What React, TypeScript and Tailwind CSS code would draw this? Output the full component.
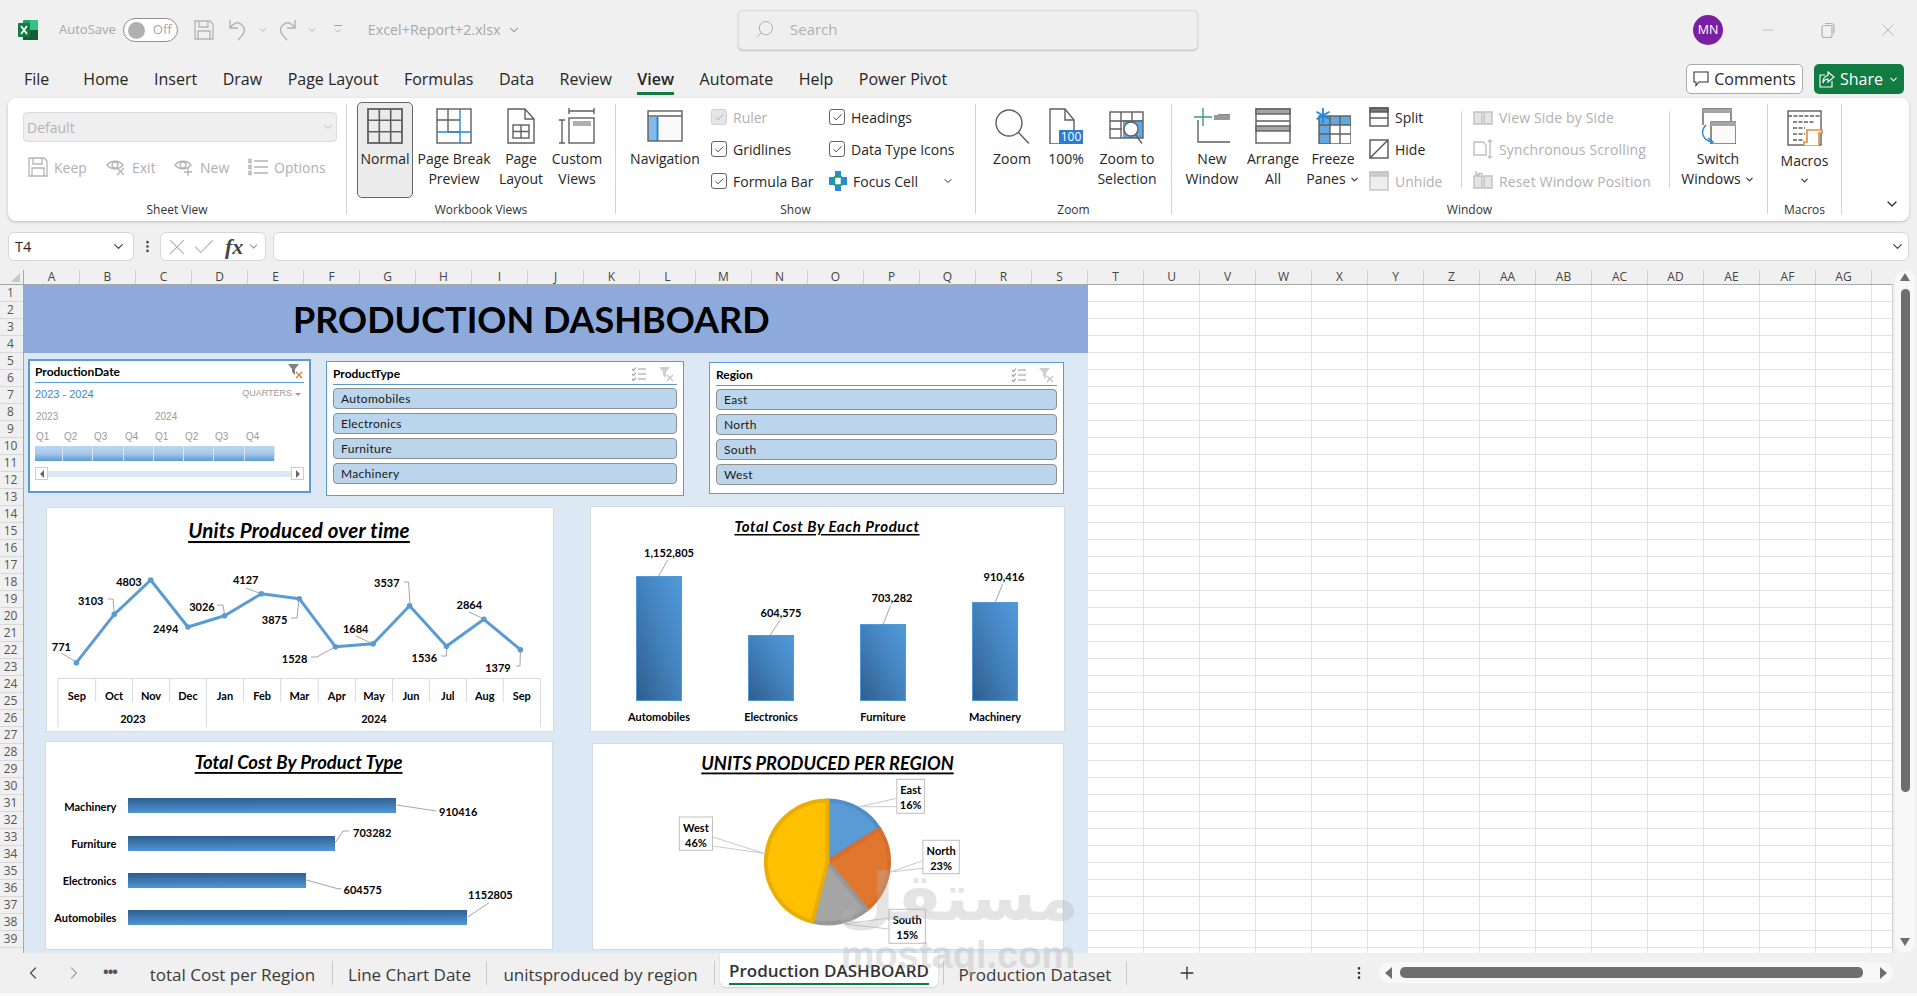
import { ChevronDown, ChevronLeft, ChevronRight, Check, Plus, Search, X, Minus, MoreVertical } from "lucide-react"
import type { ReactNode } from "react"

const STROKE = "#5f5f5f"

const COLUMNS_LEFT = "A B C D E F G H I J K L M N O P Q R S T U V W X Y Z AA AB AC AD AE AF AG".split(" ")
const ROWS = Array.from({ length: 39 }, (_, i) => i + 1)

// ---- small title bar / ribbon icons ----

function ExcelLogo() {
  return (
    <svg width="20" height="20" viewBox="0 0 20 20">
      <rect x="5" y="0" width="15" height="20" rx="1" fill="#21a366" />
      <rect x="12" y="0" width="8" height="10" fill="#33c481" />
      <rect x="5" y="10" width="15" height="10" fill="#185c37" />
      <rect x="0" y="3" width="12" height="14" rx="1" fill="#107c41" />
      <path d="M3 6l6 8M9 6l-6 8" stroke="#fff" strokeWidth="1.8" />
    </svg>
  )
}

function SaveIcon({ color = "#b4b4b4", size = 20 }: { color?: string; size?: number }) {
  return (
    <svg width={size} height={size} viewBox="0 0 20 20" fill="none" stroke={color} strokeWidth="1.3">
      <path d="M1 1h15l3 3v15H1z" />
      <path d="M5 1v6h9V1M4 19v-8h12v8" />
    </svg>
  )
}

function UndoIcon({ flip = false }: { flip?: boolean }) {
  return (
    <svg width="20" height="22" viewBox="0 0 20 22" fill="none" stroke="#b4b4b4" strokeWidth="1.4" className={flip ? "-scale-x-100" : ""}>
      <path d="M2 1v8h8" />
      <path d="M2 9c3-4 6-6 9-5 5 2 7 7 4 11-1 2-3 4-5 6" />
    </svg>
  )
}

function EyeIcon({ mark }: { mark: "x" | "plus" }) {
  return (
    <svg width="20" height="18" viewBox="0 0 20 18" fill="none" stroke="#b4b4b4" strokeWidth="1.3">
      <path d="M1 7c4-5 12-5 16 0-4 5-12 5-16 0z" />
      <circle cx="9" cy="7" r="3" />
      {mark === "x" ? <path d="M11 10l7 7M18 10l-7 7" /> : <path d="M14 9v9M10 14h8" />}
    </svg>
  )
}

function OptionsIcon() {
  return (
    <svg width="20" height="18" viewBox="0 0 20 18" fill="none" stroke="#b4b4b4" strokeWidth="1.4">
      <path d="M6 3h14M6 9h14M6 15h14" />
      <path d="M1 1.5h2v3H1zM1 7.5h2v3H1zM1 13.5h2v3H1z" />
    </svg>
  )
}

function Big({ children }: { children: ReactNode }) {
  return (
    <svg width="36" height="36" viewBox="0 0 36 36" fill="none" stroke={STROKE} strokeWidth="1.4">
      {children}
    </svg>
  )
}

const NormalIcon = () => (
  <Big>
    <rect x="1" y="1" width="34" height="34" strokeWidth="1.8" />
    <path d="M12.3 1v34M23.7 1v34M1 12.3h34M1 23.7h34" strokeWidth="1.6" />
  </Big>
)
const PageBreakIcon = () => (
  <Big>
    <rect x="1" y="1" width="34" height="34" />
    <path d="M12 1v23M1 12h23M12 24h12" />
    <path d="M24 1v34M1 24h34" stroke="#2b88d8" />
  </Big>
)
const PageLayoutIcon = () => (
  <Big>
    <path d="M5 1h17l9 10v24H5z" />
    <path d="M22 1v10h9" />
    <rect x="10" y="17" width="16" height="13" />
    <path d="M18 17v13M10 23.5h16" />
  </Big>
)
const CustomViewsIcon = () => (
  <Big>
    <path d="M10 3h25M10 0v6M35 0v6" />
    <path d="M3 12v23M0 12h6M0 35h6" />
    <rect x="10" y="10" width="25" height="25" />
    <rect x="14" y="13" width="18" height="5" fill="#b0b0b0" stroke="none" />
  </Big>
)
const NavigationIcon = () => (
  <Big>
    <rect x="10" y="8" width="25" height="25" fill="#fafafa" stroke="none" />
    <rect x="1" y="9" width="9" height="24" fill="#82bbea" stroke="none" />
    <path d="M10.5 9v24" stroke="#2b88d8" strokeWidth="2" />
    <rect x="1" y="3" width="34" height="30" />
    <path d="M1 8h34" />
  </Big>
)
const ZoomIcon = () => (
  <Big>
    <circle cx="15" cy="15" r="13" />
    <path d="M24.5 24.5L35 35.5" />
  </Big>
)
const HundredIcon = () => (
  <Big>
    <path d="M2 1h15l9 11v24H2z" />
    <path d="M17 1v11h9" />
    <rect x="11" y="22" width="24" height="14" fill="#2b7cd3" stroke="none" />
    <text x="23" y="33" textAnchor="middle" fill="#fff" stroke="none" className="text-[12px]">100</text>
  </Big>
)
const ZoomSelectionIcon = () => (
  <Big>
    <rect x="14" y="12" width="20" height="18" fill="#63a7e2" stroke="none" />
    <rect x="1" y="4" width="33" height="26" />
    <path d="M12 4v26M23 4v8M1 13h33M1 21h12" />
    <circle cx="22" cy="21" r="7" fill="#fff" />
    <path d="M26.5 26.5l6.5 9" />
  </Big>
)
const NewWindowIcon = () => (
  <Big>
    <path d="M4 12v22h33V7H24" />
    <rect x="20" y="7" width="16" height="5" fill="#999" stroke="none" />
    <path d="M0 9h18M9 0v18" stroke="#3a9d6e" />
  </Big>
)
const ArrangeAllIcon = () => (
  <Big>
    <rect x="1" y="1" width="34" height="34" />
    <rect x="1" y="1" width="34" height="5" fill="#a5a5a5" />
    <rect x="1" y="18" width="34" height="5" fill="#a5a5a5" />
    <path d="M1 13h34" />
  </Big>
)
const FreezeIcon = () => (
  <Big>
    <rect x="4" y="8" width="32" height="28" fill="#fff" stroke="none" />
    <rect x="4" y="8" width="32" height="9" fill="#63a7e2" stroke="none" />
    <rect x="4" y="8" width="11" height="28" fill="#63a7e2" stroke="none" />
    <rect x="4" y="8" width="32" height="28" />
    <path d="M15 8v28M25 8v28M4 17h32M4 26h32" />
    <path d="M8 0v15M1.5 3.7l13 7.6M14.5 3.7l-13 7.6" stroke="#1e88e5" strokeWidth="1.8" />
  </Big>
)
const SwitchWindowsIcon = () => (
  <Big>
    <path d="M3 17V1h28v12" />
    <rect x="3" y="1" width="28" height="4" fill="#a5a5a5" stroke="none" />
    <rect x="11" y="14" width="25" height="22" fill="#fafafa" />
    <rect x="11" y="14" width="25" height="4" fill="#a5a5a5" stroke="none" />
    <path d="M6 17c-6 6-4 15 6 17M8 30l5 4-5 4" stroke="#2b88d8" />
  </Big>
)
const MacrosIcon = () => (
  <Big>
    <rect x="1" y="1" width="33" height="34" />
    <path d="M1 6h33M6 12h22M6 18h12M6 24h12M6 30h10" strokeDasharray="4 1.5" />
    <path d="M20 20h15v3h-3v13H17v-4h3z" fill="#fff" stroke="#e8893a" strokeWidth="1.6" />
  </Big>
)

function SmallBox({ children, disabled = false }: { children: ReactNode; disabled?: boolean }) {
  return (
    <svg width="20" height="20" viewBox="0 0 20 20" fill="none" stroke={disabled ? "#c4c4c4" : "#555"} strokeWidth="1.4">
      {children}
    </svg>
  )
}

const DisabledPages = ({ arrows }: { arrows?: "sync" | "reset" }) => (
  <svg width="20" height="20" viewBox="0 0 20 20" fill="none" stroke="#c0c0c0" strokeWidth="1.4">
    {arrows === "sync" ? (
      <>
        <path d="M1 3h9l3 3v10H1z" />
        <path d="M17 1v18M15 3l2-2 2 2M15 17l2 2 2-2" />
      </>
    ) : (
      <>
        <path d="M1 5h8v12H1zM11 5h8v12h-8z" fill="#e4e4e4" />
        {arrows === "reset" && <path d="M4 4c1-2 4-3 6 0M3 0v4h4" />}
      </>
    )}
  </svg>
)

function ChipCheck({ disabled = false }: { disabled?: boolean }) {
  return (
    <span className={`flex h-[16px] w-[16px] items-center justify-center rounded-[3px] border ${disabled ? "border-[#d0d0d0] bg-[#e6e6e6]" : "border-[#666666] bg-white"}`}>
      <Check size={11} strokeWidth={2} color={disabled ? "#a8a8a8" : "#333333"} />
    </span>
  )
}

function BigButton({ icon, lines, className = "", active = false }: { icon: ReactNode; lines: ReactNode[]; className?: string; active?: boolean }) {
  return (
    <div className={`flex h-[96px] shrink-0 flex-col items-center ${active ? "rounded-[5px] border border-[#666666] bg-[#ebebeb] pt-[5px]" : "pt-[6px]"} ${className}`}>
      <div className="flex h-[36px] items-center justify-center">{icon}</div>
      <div className="mt-[5px] text-center text-[14px] leading-[20px] text-[#262626]">
        {lines.map((l, i) => (
          <div key={i} className="flex items-center justify-center whitespace-nowrap">{l}</div>
        ))}
      </div>
    </div>
  )
}

function Group({ label, className, children }: { label: string; className: string; children: ReactNode }) {
  return (
    <div className={`flex shrink-0 flex-col pt-[4px] ${className}`}>
      <div className="flex h-[96px]">{children}</div>
      <div className="flex h-[23px] items-center justify-center text-[12px] text-[#333333]">{label}</div>
    </div>
  )
}

const Sep = () => <div className="mt-[6px] mb-[7px] w-px shrink-0 bg-[#d4d4d4]" />

function Row32({ children, muted = false, gap = "gap-[6px]" }: { children: ReactNode; muted?: boolean; gap?: string }) {
  return <div className={`flex h-[32px] items-center whitespace-nowrap text-[14px] ${gap} ${muted ? "text-[#b0b0b0]" : "text-[#262626]"}`}>{children}</div>
}

const smallChevron = <ChevronDown size={11} className="ml-[3px]" strokeWidth={2.2} />

function Ribbon() {
  return (
    <div className="mx-2 flex h-[123px] shrink-0 rounded-[8px] bg-white shadow-[0_1px_3px_rgba(0,0,0,0.22)]">
      <Group label="Sheet View" className="w-[338px]">
        <div className="pl-[15px]">
          <div className="mt-[10px] flex h-[30px] w-[314px] items-center justify-between rounded-[4px] border border-[#dcdcdc] bg-[#efefef] pr-[2px] pl-[3px] text-[14px] text-[#b4b4b4]">
            Default
            <ChevronDown size={12} />
          </div>
          <div className="mt-[15px] flex h-[20px] items-center pl-[5px] text-[14px] text-[#b0b0b0]">
            <span className="flex w-[78px] items-center gap-[6px]"><SaveIcon />Keep</span>
            <span className="flex w-[68px] items-center gap-[6px]"><EyeIcon mark="x" />Exit</span>
            <span className="flex w-[74px] items-center gap-[6px]"><EyeIcon mark="plus" />New</span>
            <span className="flex items-center gap-[6px]"><OptionsIcon />Options</span>
          </div>
        </div>
      </Group>
      <Sep />
      <Group label="Workbook Views" className="w-[268px]">
        <BigButton active icon={<NormalIcon />} lines={["Normal"]} className="ml-[10px] w-[56px]" />
        <BigButton icon={<PageBreakIcon />} lines={["Page Break", "Preview"]} className="ml-[4px] w-[74px]" />
        <BigButton icon={<PageLayoutIcon />} lines={["Page", "Layout"]} className="ml-[2px] w-[56px]" />
        <BigButton icon={<CustomViewsIcon />} lines={["Custom", "Views"]} className="w-[56px]" />
      </Group>
      <Sep />
      <Group label="Show" className="w-[359px]">
        <BigButton icon={<NavigationIcon />} lines={["Navigation"]} className="ml-[4px] w-[90px]" />
        <div className="-mt-px ml-px w-[118px]">
          <Row32 muted><ChipCheck disabled />Ruler</Row32>
          <Row32><ChipCheck />Gridlines</Row32>
          <Row32><ChipCheck />Formula Bar</Row32>
        </div>
        <div className="-mt-px">
          <Row32><ChipCheck />Headings</Row32>
          <Row32><ChipCheck />Data Type Icons</Row32>
          <Row32>
            <svg width="18" height="20" viewBox="0 0 18 20">
              <path d="M6 0h6v6h6v8h-6v6H6v-6H0V6h6z" fill="#2b88d8" />
              <rect x="5.5" y="6" width="7" height="8" fill="#fff" stroke="#21a366" strokeWidth="1.6" />
            </svg>
            Focus Cell
            <ChevronDown size={12} className="ml-[18px]" />
          </Row32>
        </div>
      </Group>
      <Sep />
      <Group label="Zoom" className="w-[195px]">
        <BigButton icon={<ZoomIcon />} lines={["Zoom"]} className="ml-[8px] w-[56px]" />
        <BigButton icon={<HundredIcon />} lines={["100%"]} className="w-[52px]" />
        <BigButton icon={<ZoomSelectionIcon />} lines={["Zoom to", "Selection"]} className="w-[70px]" />
      </Group>
      <Sep />
      <Group label="Window" className="w-[595px]">
        <BigButton icon={<NewWindowIcon />} lines={["New", "Window"]} className="ml-[8px] w-[64px]" />
        <BigButton icon={<ArrangeAllIcon />} lines={["Arrange", "All"]} className="w-[58px]" />
        <BigButton icon={<FreezeIcon />} lines={["Freeze", <>Panes{smallChevron}</>]} className="w-[62px]" />
        <div className="-mt-px ml-[5px] w-[92px]">
          <Row32>
            <SmallBox><rect x="1" y="1" width="18" height="18" /><rect x="1" y="1" width="18" height="4" fill="#777" /><path d="M1 11h18" /></SmallBox>
            Split
          </Row32>
          <Row32>
            <SmallBox><rect x="1" y="1" width="18" height="18" /><path d="M1 19L19 1" /></SmallBox>
            Hide
          </Row32>
          <Row32 muted>
            <SmallBox disabled><rect x="1" y="1" width="18" height="18" fill="#eeeeee" /><rect x="1" y="1" width="18" height="4" fill="#cccccc" /></SmallBox>
            Unhide
          </Row32>
        </div>
        <div className="my-[9px] w-px bg-[#d4d4d4]" />
        <div className="-mt-px ml-[11px] w-[196px] tracking-[0.15px]">
          <Row32 muted><DisabledPages />View Side by Side</Row32>
          <Row32 muted><DisabledPages arrows="sync" />Synchronous Scrolling</Row32>
          <Row32 muted><DisabledPages arrows="reset" />Reset Window Position</Row32>
        </div>
        <div className="my-[9px] w-px bg-[#d4d4d4]" />
        <BigButton icon={<SwitchWindowsIcon />} lines={["Switch", <>Windows{smallChevron}</>]} className="w-[96px]" />
      </Group>
      <Sep />
      <Group label="Macros" className="w-[73px]">
        <div className="flex w-full flex-col items-center pt-[8px] text-[14px] leading-[20px] text-[#262626]">
          <MacrosIcon />
          <span className="mt-[5px]">Macros</span>
          <ChevronDown size={11} className="mt-[4px]" strokeWidth={2.2} />
        </div>
      </Group>
      <Sep />
      <div className="flex flex-1 items-end justify-end pr-[9px] pb-[9px]">
        <ChevronDown size={16} color="#333333" />
      </div>
    </div>
  )
}

// ---- slicers ----

function ListIcon() {
  return (
    <svg width="15" height="14" viewBox="0 0 15 14" fill="none" stroke="#9a9a9a" strokeWidth="1.1">
      <path d="M7 2h8M7 7h8M7 12h8M1 2l1.5 1.5L5 .5M1 7l1.5 1.5L5 5.5M1 12l1.5 1.5L5 10.5" />
    </svg>
  )
}

function FilterClear({ active = false }: { active?: boolean }) {
  return (
    <svg width="16" height="15" viewBox="0 0 16 15" fill="none">
      <path d="M0 0h11L7 5v6L4 8V5z" fill={active ? "#7f7f7f" : "#cfcfcf"} />
      <path d="M8 8l6 6M14 8l-6 6" stroke={active ? "#e07830" : "#c4c4c4"} strokeWidth="1.3" />
    </svg>
  )
}

function Slicer({ title, items, className, itemsWidth }: { title: string; items: string[]; className: string; itemsWidth: string }) {
  return (
    <div className={`border-[1.5px] border-[#5b9bd5] bg-white px-[6px] font-['Lato',sans-serif] ${className}`}>
      <div className={`flex h-[23px] items-center justify-between border-b border-[#5b9bd5] pt-[2px] pr-[2px] text-[12px] font-bold text-black ${itemsWidth}`}>
        {title}
        <span className="flex items-center gap-[13px]"><ListIcon /><FilterClear /></span>
      </div>
      <div className={`mt-[3px] flex flex-col gap-[4px] ${itemsWidth}`}>
        {items.map((item) => (
          <div key={item} className="flex h-[21px] items-center rounded-[4px] border border-[#8f8f8f] bg-[#bbd5ec] pl-[7px] text-[12px] tracking-[0.3px] text-[#1a1a1a]">
            {item}
          </div>
        ))}
      </div>
    </div>
  )
}

function DateSlicer() {
  const segments = [
    { q: "Q1", w: "w-[28px]" },
    { q: "Q2", w: "w-[30px]" },
    { q: "Q3", w: "w-[31px]" },
    { q: "Q4", w: "w-[30px]" },
    { q: "Q1", w: "w-[30px]" },
    { q: "Q2", w: "w-[30px]" },
    { q: "Q3", w: "w-[31px]" },
    { q: "Q4", w: "w-[30px]" },
  ]
  return (
    <div className="ml-[4px] mt-[6px] h-[134px] w-[283px] shrink-0 border-2 border-[#5b9bd5] bg-white px-[5px] font-['Liberation_Sans',sans-serif]">
      <div className="flex h-[22px] items-center justify-between border-b border-[#5b9bd5] font-['Lato',sans-serif] text-[12px] font-bold text-black">
        ProductionDate
        <FilterClear active />
      </div>
      <div className="flex h-[22px] items-center justify-between pr-[3px]">
        <span className="text-[11px] text-[#3f84c8]">2023 - 2024</span>
        <span className="flex items-center gap-[3px] text-[9px] text-[#9a9a9a]">
          QUARTERS
          <span className="h-0 w-0 border-x-[3px] border-t-[3px] border-x-transparent border-t-[#9a9a9a]" />
        </span>
      </div>
      <div className="flex h-[22px] items-center text-[10px] text-[#9a9a9a]">
        <span className="w-[120px] pl-px">2023</span>
        <span>2024</span>
      </div>
      <div className="flex h-[18px] items-center text-[10px] text-[#9a9a9a]">
        {segments.map((s, i) => (
          <span key={i} className={`pl-px ${s.w}`}>{s.q}</span>
        ))}
      </div>
      <div className="mt-px flex h-[15px]">
        {segments.map((s, i) => (
          <div key={i} className={`border-r border-[#d6e6f5] bg-linear-to-b from-[#bcd6ef] via-[#a6c8ea] to-[#5b9bd5] ${s.w}`} />
        ))}
      </div>
      <div className="mt-[6px] flex h-[13px] items-center">
        <span className="flex h-[13px] w-[13px] items-center justify-center border border-[#cccccc]">
          <span className="h-0 w-0 border-y-[4px] border-r-[4px] border-y-transparent border-r-[#666666]" />
        </span>
        <div className="h-[6px] flex-1 bg-[#dce9f5]" />
        <span className="flex h-[13px] w-[13px] items-center justify-center border border-[#cccccc]">
          <span className="h-0 w-0 border-y-[4px] border-l-[4px] border-y-transparent border-l-[#666666]" />
        </span>
      </div>
    </div>
  )
}

// ---- charts (svg viewBox uses the sheet's pixel coordinates) ----

function ChartText({ x, y, children, anchor = "middle", size = "text-[11px]" }: { x: number; y: number; children: ReactNode; anchor?: "middle" | "start" | "end"; size?: string }) {
  return (
    <text x={x} y={y} textAnchor={anchor} dominantBaseline="central" fill="#000" className={`font-bold ${size}`}>
      {children}
    </text>
  )
}

function ChartTitle({ x, y, children, className }: { x: number; y: number; children: ReactNode; className: string }) {
  return (
    <text x={x} y={y} textAnchor="middle" dominantBaseline="central" fill="#000" className={`font-bold italic underline ${className}`}>
      {children}
    </text>
  )
}

const Leader = ({ d }: { d: string }) => <path d={d} fill="none" stroke="#a6a6a6" strokeWidth="1" />

function LineChart() {
  const pts: [number, number][] = [
    [76.4, 662.7], [114.3, 614.3], [150.7, 580], [187.9, 627], [224.6, 615.7], [261.4, 593.7], [299.3, 598.7],
    [335.4, 646.7], [373.2, 643.7], [409.6, 605.7], [446.4, 646.3], [483.9, 619.3], [520.4, 649.7],
  ]
  const labels: [string, number, number][] = [
    ["771", 61.4, 646], ["3103", 90.7, 600], ["4803", 129, 581], ["2494", 165.7, 628.3], ["3026", 202, 606],
    ["4127", 245.7, 579], ["3875", 274.6, 619], ["1528", 294.6, 658], ["1684", 355.7, 628.3], ["3537", 386.8, 582.7],
    ["1536", 424.3, 657], ["2864", 469.3, 604], ["1379", 497.9, 667],
  ]
  const leaders = [
    "M61.4 653L76 662", "M108 599h5l1.3 14", "M217 605h6l1.6 10", "M245.7 588L261 593.7", "M291 618h6l2-19",
    "M311 657h6l18-10", "M356 636l17 8", "M403.6 582h5l1.4 23", "M441 656h5.4l.4-9", "M469 612l15 7", "M516 666h4l.4-15",
  ]
  const edges = [58, 95.7, 132.5, 169.6, 206.4, 243.6, 280.7, 318.2, 355.4, 392.5, 429.3, 466.4, 503.2, 540.4]
  const months = ["Sep", "Oct", "Nov", "Dec", "Jan", "Feb", "Mar", "Apr", "May", "Jun", "Jul", "Aug", "Sep"]
  return (
    <svg width="506" height="223" viewBox="47 508 506 223" className="block font-['Lato',sans-serif]">
      <ChartTitle x={299} y={530} className="text-[20.5px] tracking-[0.2px]">Units Produced over time</ChartTitle>
      <path d={`M${edges[0]} 678.5H${edges[13]}`} stroke="#d9d9d9" fill="none" />
      {edges.map((x, i) => (
        <path key={i} d={`M${x} 678V${i === 0 || i === 4 || i === 13 ? 727 : 702}`} stroke="#d9d9d9" fill="none" />
      ))}
      {months.map((m, i) => (
        <ChartText key={i} x={(edges[i] + edges[i + 1]) / 2} y={695}>{m}</ChartText>
      ))}
      <ChartText x={133} y={718}>2023</ChartText>
      <ChartText x={374} y={718}>2024</ChartText>
      {leaders.map((d) => <Leader key={d} d={d} />)}
      <polyline points={pts.map((p) => p.join(",")).join(" ")} fill="none" stroke="#5b9bd5" strokeWidth="3" strokeLinejoin="round" />
      {pts.map(([x, y], i) => <circle key={i} cx={x} cy={y} r="2.8" fill="#5b9bd5" />)}
      {labels.map(([t, x, y]) => <ChartText key={t} x={x} y={y}>{t}</ChartText>)}
    </svg>
  )
}

function BarChart() {
  const bars = [
    { name: "Automobiles", x: 636, top: 576, label: "1,152,805", lx: 669, ly: 552, d: "M667.7 560L658.7 576" },
    { name: "Electronics", x: 748, top: 635, label: "604,575", lx: 781, ly: 612, d: "M780 620L770.3 635" },
    { name: "Furniture", x: 860, top: 624, label: "703,282", lx: 892, ly: 597, d: "M890.7 605.3L883.3 624" },
    { name: "Machinery", x: 972, top: 602, label: "910,416", lx: 1004, ly: 576, d: "M1002.7 584L995.3 602" },
  ]
  return (
    <svg width="473" height="224" viewBox="591 507 473 224" className="block font-['Lato',sans-serif]">
      <defs>
        <linearGradient id="barFill" x1="0" y1="1" x2="1" y2="0">
          <stop offset="0" stopColor="#2f5d8c" />
          <stop offset="0.55" stopColor="#4484bf" />
          <stop offset="1" stopColor="#5199dc" />
        </linearGradient>
      </defs>
      <ChartTitle x={827} y={526} className="text-[15px] tracking-[0.6px]">Total Cost By Each Product</ChartTitle>
      {bars.map((b) => (
        <g key={b.name}>
          <rect x={b.x + 0.5} y={b.top + 0.5} width="45" height={700 - b.top} fill="url(#barFill)" stroke="#5199dc" />
          <Leader d={b.d} />
          <ChartText x={b.lx} y={b.ly}>{b.label}</ChartText>
          <ChartText x={b.x + 23} y={716}>{b.name}</ChartText>
        </g>
      ))}
    </svg>
  )
}

function HBarChart() {
  const bars = [
    { name: "Machinery", y: 798, end: 396, cy: 806 },
    { name: "Furniture", y: 836, end: 335, cy: 843 },
    { name: "Electronics", y: 873, end: 306, cy: 880 },
    { name: "Automobiles", y: 910, end: 467, cy: 917 },
  ]
  return (
    <svg width="506" height="207" viewBox="46 742 506 207" className="block font-['Lato',sans-serif]">
      <defs>
        <linearGradient id="hbarFill" x1="0" y1="0" x2="0.06" y2="1">
          <stop offset="0" stopColor="#2f5d8c" />
          <stop offset="0.7" stopColor="#4484bf" />
          <stop offset="1" stopColor="#4f95d8" />
        </linearGradient>
      </defs>
      <ChartTitle x={298.6} y={762} className="text-[18.5px]">Total Cost By Product Type</ChartTitle>
      {bars.map((b) => (
        <g key={b.name}>
          <rect x="128" y={b.y} width={b.end - 128} height="15" fill="url(#hbarFill)" />
          <ChartText x={116.4} y={b.cy} anchor="end">{b.name}</ChartText>
        </g>
      ))}
      <Leader d="M396.8 805L436.4 811" />
      <Leader d="M335 843L343 831h6" />
      <Leader d="M306.4 880L337.5 888.7h4" />
      <Leader d="M467.8 917L489 902.7" />
      <ChartText x={439} y={811} anchor="start">910416</ChartText>
      <ChartText x={353} y={832} anchor="start">703282</ChartText>
      <ChartText x={343.6} y={889} anchor="start">604575</ChartText>
      <ChartText x={468} y={894} anchor="start">1152805</ChartText>
    </svg>
  )
}

function slicePath(cx: number, cy: number, r: number, from: number, to: number) {
  const pt = (a: number) => {
    const rad = (a * Math.PI) / 180
    return `${(cx + r * Math.sin(rad)).toFixed(1)} ${(cy - r * Math.cos(rad)).toFixed(1)}`
  }
  return `M${cx} ${cy}L${pt(from)}A${r} ${r} 0 ${to - from > 180 ? 1 : 0} 1 ${pt(to)}Z`
}

function PieLabel({ x, y, w, h, name, pct }: { x: number; y: number; w: number; h: number; name: string; pct: string }) {
  return (
    <g>
      <rect x={x} y={y} width={w} height={h} fill="#fff" stroke="#bfbfbf" />
      <ChartText x={x + w / 2} y={y + 10}>{name}</ChartText>
      <ChartText x={x + w / 2} y={y + 25}>{pct}</ChartText>
    </g>
  )
}

function PieChart() {
  const cx = 827.5
  const cy = 862
  return (
    <svg width="470" height="205" viewBox="593 744 470 205" className="block font-['Lato',sans-serif]">
      <ChartTitle x={827.5} y={762.5} className="text-[18.2px]">UNITS PRODUCED PER REGION</ChartTitle>
      <path d={slicePath(cx, cy, 61.5, 0, 57.6)} fill="#5b9bd5" stroke="#4f8ecb" strokeWidth="4" strokeLinejoin="round" />
      <path d={slicePath(cx, cy, 61.5, 57.6, 140.4)} fill="#e1762f" stroke="#d66f2c" strokeWidth="4" strokeLinejoin="round" />
      <path d={slicePath(cx, cy, 61.5, 140.4, 194.4)} fill="#a5a5a5" stroke="#989898" strokeWidth="4" strokeLinejoin="round" />
      <path d={slicePath(cx, cy, 61.5, 194.4, 360)} fill="#ffc000" stroke="#e8ae00" strokeWidth="4" strokeLinejoin="round" />
      <path d="M896.8 798.3L859.6 806.7H896.8" fill="none" stroke="#c8c8c8" />
      <path d="M921.8 861L890.7 872L922.9 868.3" fill="none" stroke="#c8c8c8" />
      <path d="M889 918L844 924L889 929" fill="none" stroke="#c8c8c8" />
      <path d="M712.5 837L764 853.3L712.5 846" fill="none" stroke="#c8c8c8" />
      <PieLabel x={896.8} y={779.3} w={27.8} h={34} name="East" pct="16%" />
      <PieLabel x={922.9} y={840.3} w={36.4} h={33.4} name="North" pct="23%" />
      <PieLabel x={889} y={909.3} w={36.4} h={34} name="South" pct="15%" />
      <PieLabel x={679.3} y={817} w={33.2} h={33.3} name="West" pct="46%" />
    </svg>
  )
}

function ChartCard({ className, children }: { className: string; children: ReactNode }) {
  return <div className={`shrink-0 border border-[#d3dbe3] bg-white ${className}`}>{children}</div>
}

function Dashboard() {
  return (
    <div className="flex h-[668px] w-[1064px] shrink-0 flex-col overflow-hidden bg-[#dce9f5]">
      <div className="flex h-[68px] shrink-0 items-center bg-[#8eaadb] pl-[269px] font-['Lato',sans-serif] text-[36px] font-bold text-black">
        PRODUCTION DASHBOARD
      </div>
      <div className="flex h-[153px] shrink-0 items-start">
        <DateSlicer />
        <Slicer title="ProductType" items={["Automobiles", "Electronics", "Furniture", "Machinery"]} className="mt-[8px] ml-[15px] h-[135px] w-[358px] shrink-0" itemsWidth="w-[344px]" />
        <Slicer title="Region" items={["East", "North", "South", "West"]} className="mt-[9px] ml-[25px] h-[132px] w-[355px] shrink-0" itemsWidth="w-[341px]" />
      </div>
      <div className="flex h-[235px] shrink-0 items-start">
        <ChartCard className="mt-px ml-[22px] h-[225px] w-[508px]"><LineChart /></ChartCard>
        <ChartCard className="ml-[36px] h-[226px] w-[475px]"><BarChart /></ChartCard>
      </div>
      <div className="flex flex-1 items-start">
        <ChartCard className="ml-[21px] h-[209px] w-[508px]"><HBarChart /></ChartCard>
        <ChartCard className="mt-[2px] ml-[39px] h-[207px] w-[472px]"><PieChart /></ChartCard>
      </div>
    </div>
  )
}

// ---- sheet ----

function Sheet() {
  return (
    <div className="mt-[9px] flex h-[683px] shrink-0">
      <div className="flex flex-1 flex-col">
        <div className="flex h-[15px] shrink-0 border-b border-[#a8a8a8] text-[12px] leading-[14px] text-[#444444]">
          <div className="flex w-[24px] shrink-0 items-end justify-end border-r border-[#a8a8a8] pr-[3px] pb-[2px]">
            <span className="h-0 w-0 border-b-[9px] border-l-[9px] border-b-[#c8c8c8] border-l-transparent" />
          </div>
          {COLUMNS_LEFT.map((c) => (
            <div key={c} className="w-[56px] shrink-0 border-r border-[#d0d0d0] text-center">{c}</div>
          ))}
          <div className="flex-1" />
        </div>
        <div className="flex min-h-0 flex-1">
          <div className="w-[24px] shrink-0 overflow-hidden border-r border-[#a8a8a8] text-[12px] text-[#555555]">
            {ROWS.map((r) => (
              <div key={r} className="flex h-[17px] items-center justify-center border-b border-[#d8d8d8] pr-[2px]">{r}</div>
            ))}
          </div>
          <Dashboard />
          <div className="flex-1 border-r border-[#d0d0d0] bg-white bg-[linear-gradient(to_right,transparent_55px,#e2e2e2_55px),linear-gradient(to_bottom,transparent_16px,#e2e2e2_16px)] bg-[size:56px_17px]" />
        </div>
      </div>
      <div className="mx-[2px] flex w-[20px] shrink-0 flex-col items-center rounded-[10px] bg-[#f8f8f8] pt-[3px] pb-[3px]">
        <span className="h-0 w-0 border-x-[5px] border-b-[8px] border-x-transparent border-b-[#6e6e6e]" />
        <div className="mt-[8px] h-[503px] w-[9px] rounded-[5px] bg-[#6e6e6e]" />
        <span className="mt-auto mb-[4px] h-0 w-0 border-x-[5px] border-t-[8px] border-x-transparent border-t-[#6e6e6e]" />
      </div>
    </div>
  )
}

function SheetTab({ label, className }: { label: string; className: string }) {
  return (
    <div className={`flex h-[24px] shrink-0 items-center justify-center border-r border-[#c8c8c8] pt-[3px] text-[17px] text-[#3a3a3a] ${className}`}>
      {label}
    </div>
  )
}

function SheetTabs() {
  return (
    <div className="flex h-[40px] shrink-0 bg-[#f0f0f0] pt-[8px]">
      <div className="flex w-[133px] shrink-0 items-start pt-[2px] text-[#555555]">
        <ChevronLeft size={20} className="ml-[23px]" strokeWidth={1.6} />
        <ChevronRight size={20} className="ml-[21px] text-[#a8a8a8]" strokeWidth={1.6} />
        <span className="mt-[-2px] ml-[19px] text-[15px] leading-[20px] font-bold tracking-[-1px]">•••</span>
      </div>
      <SheetTab label="total Cost per Region" className="w-[200px]" />
      <SheetTab label="Line Chart Date" className="w-[154px]" />
      <SheetTab label="unitsproduced by region" className="w-[228px]" />
      <div className="mt-[-8px] ml-[5px] flex h-[34px] w-[218px] shrink-0 flex-col items-center rounded-b-[6px] bg-white pt-[6px] shadow-[0_1px_2px_rgba(0,0,0,0.15)]">
        <span className="border-b-[2px] border-[#107c41] text-[17px] leading-[24px] font-semibold whitespace-nowrap text-[#333333]">
          Production DASHBOARD
        </span>
      </div>
      <div className="ml-[5px] h-[24px] w-px shrink-0 bg-[#c8c8c8]" />
      <SheetTab label="Production Dataset" className="w-[183px]" />
      <div className="flex h-[24px] w-[120px] shrink-0 items-center justify-center">
        <Plus size={20} color="#333333" strokeWidth={1.6} />
      </div>
      <div className="flex h-[24px] w-[132px] shrink-0 items-center justify-end pr-[12px]">
        <MoreVertical size={16} color="#333333" />
      </div>
      <div className="mt-[1px] flex h-[21px] w-[514px] shrink-0 items-center rounded-[10px] bg-[#f8f8f8] px-[6px]">
        <span className="h-0 w-0 border-y-[6px] border-r-[7px] border-y-transparent border-r-[#6e6e6e]" />
        <div className="ml-[8px] h-[11px] w-[463px] rounded-[5px] bg-[#6e6e6e]" />
        <span className="ml-auto h-0 w-0 border-y-[6px] border-l-[7px] border-y-transparent border-l-[#6e6e6e]" />
      </div>
    </div>
  )
}

function TitleBar() {
  return (
    <div className="flex h-[60px] shrink-0 items-center">
      <div className="flex w-[738px] shrink-0 items-center text-[#a8a8a8]">
        <div className="ml-[18px]"><ExcelLogo /></div>
        <span className="ml-[21px] text-[13px]">AutoSave</span>
        <div className="ml-[7px] flex h-[24px] w-[55px] items-center rounded-full border border-[#8f8f8f] bg-white pl-[4px] text-[13px]">
          <span className="h-[17px] w-[17px] rounded-full bg-[#b0b0b0]" />
          <span className="ml-[8px]">Off</span>
        </div>
        <div className="ml-[16px]"><SaveIcon /></div>
        <div className="ml-[14px]"><UndoIcon /></div>
        <ChevronDown size={10} className="ml-[10px]" />
        <div className="ml-[9px]"><UndoIcon flip /></div>
        <ChevronDown size={10} className="ml-[10px]" />
        <span className="ml-[16px] flex flex-col items-center gap-[2px]">
          <span className="h-px w-[8px] bg-[#a8a8a8]" />
          <ChevronDown size={10} className="-mt-[2px]" />
        </span>
        <span className="ml-[25px] text-[14.3px]">Excel+Report+2.xlsx</span>
        <ChevronDown size={14} className="ml-[6px]" />
      </div>
      <div className="flex h-[40px] w-[460px] shrink-0 items-center rounded-[5px] border border-[#dcdcdc] bg-[#efefef] pb-[2px] pl-[16px] text-[15px] text-[#b0b0b0] shadow-[0_1px_2px_rgba(0,0,0,0.2)]">
        <Search size={20} strokeWidth={1.2} className="-scale-x-100" />
        <span className="ml-[15px]">Search</span>
      </div>
      <div className="flex flex-1 items-center justify-end text-[#b0b0b0]">
        <div className="flex h-[30px] w-[30px] items-center justify-center rounded-full bg-[#7b1fa2] text-[12.5px] text-white">MN</div>
        <div className="ml-[15px] flex w-[60px] justify-center"><Minus size={16} strokeWidth={1.2} /></div>
        <div className="flex w-[60px] justify-center">
          <svg width="14" height="16" viewBox="0 0 14 16" fill="none" stroke="#b0b0b0" strokeWidth="1.2">
            <rect x="1" y="3.5" width="10" height="12" rx="2" />
            <path d="M4 1.5h6a3 3 0 0 1 3 3v7" />
          </svg>
        </div>
        <div className="flex w-[59px] justify-center"><X size={20} strokeWidth={1.1} /></div>
      </div>
    </div>
  )
}

function MenuBar() {
  const tabs = ["Home", "Insert", "Draw", "Page Layout", "Formulas", "Data", "Review", "View", "Automate", "Help", "Power Pivot"]
  return (
    <div className="flex h-[38px] shrink-0 items-start pl-[24px] text-[16px] text-[#262626]">
      <span className="mr-[34px] flex h-[35px] items-center border-b-[3px] border-transparent pt-[6px]">File</span>
      <div className="flex gap-[25.5px]">
        {tabs.map((t) => (
          <span key={t} className={`flex h-[35px] items-center border-b-[3px] pt-[6px] whitespace-nowrap ${t === "View" ? "border-[#107c41] font-semibold" : "border-transparent"}`}>
            {t}
          </span>
        ))}
      </div>
      <div className="ml-auto flex items-center gap-[11px] pt-[4px] pr-[13px]">
        <div className="flex h-[30px] w-[117px] items-center justify-center gap-[5px] rounded-[5px] border border-[#aaaaaa] bg-white text-[16px]">
          <svg width="16" height="16" viewBox="0 0 16 16" fill="none" stroke="#333" strokeWidth="1.1">
            <path d="M1 1h14v10H6l-3 3.5V11H1z" />
          </svg>
          Comments
        </div>
        <div className="flex h-[30px] w-[90px] items-center justify-center gap-[5px] rounded-[5px] bg-[#107c41] text-[16px] text-white">
          <svg width="16" height="17" viewBox="0 0 16 17" fill="none" stroke="#fff" strokeWidth="1.1">
            <path d="M6 4H1v12h12V10" />
            <path d="M9 1l6 5-6 5V8C6 8 5 9 4 12c0-5 2-7 5-7.5z" />
          </svg>
          Share
          <ChevronDown size={11} strokeWidth={2.2} />
        </div>
      </div>
    </div>
  )
}

function FormulaBar() {
  return (
    <div className="mx-2 mt-[11px] flex h-[29px] shrink-0 items-stretch text-[#262626]">
      <div className="flex w-[126px] shrink-0 items-center justify-between rounded-[6px] border border-[#d6d6d6] bg-white pr-[7px] pl-[6px] text-[14.5px]">
        T4
        <ChevronDown size={15} color="#444444" />
      </div>
      <div className="flex w-[26px] shrink-0 items-center justify-center">
        <MoreVertical size={15} color="#444444" strokeWidth={2.2} />
      </div>
      <div className="flex w-[106px] shrink-0 items-center rounded-[6px] border border-[#d6d6d6] bg-white pl-[3px]">
        <X size={26} color="#b8b8b8" strokeWidth={1} />
        <Check size={26} color="#b8b8b8" strokeWidth={1} className="ml-[1px]" />
        <span className="ml-[8px] font-['Liberation_Serif',serif] text-[22px] font-bold text-[#444444] italic">fx</span>
        <ChevronDown size={13} color="#999999" className="ml-[4px]" />
      </div>
      <div className="ml-[7px] flex flex-1 items-center justify-end rounded-[6px] border border-[#d6d6d6] bg-white pr-[3px]">
        <ChevronDown size={15} color="#444444" />
      </div>
    </div>
  )
}

export default function App() {
  return (
    <div className="relative flex h-[996px] w-[1917px] flex-col overflow-hidden bg-[#f0f0f0] font-['Open_Sans',sans-serif]">
      <TitleBar />
      <MenuBar />
      <Ribbon />
      <FormulaBar />
      <Sheet />
      <SheetTabs />
      <div className="flex-1 bg-[#f8f8f8]" />

      {/* site watermark burned into the screenshot */}
      <div className="pointer-events-none absolute top-[856px] left-[838px] flex w-[240px] flex-col items-center text-[#b4b4b4] opacity-35">
        <span className="font-['DejaVu_Sans',sans-serif] text-[66px] leading-[84px] font-bold">مستقل</span>
        <span className="font-['Liberation_Sans',sans-serif] text-[38px] leading-[30px] font-bold">mostaql.com</span>
      </div>
    </div>
  )
}
